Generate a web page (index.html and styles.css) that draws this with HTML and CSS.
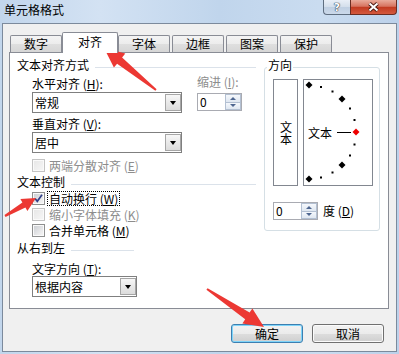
FILE: index.html
```html
<!DOCTYPE html>
<html lang="zh-CN">
<head>
<meta charset="utf-8">
<title>单元格格式</title>
<link rel="stylesheet" href="styles.css">
</head>
<body>
<div class="window">
  <div class="titlebar">
    <span class="title">单元格格式</span>
    <div class="caption">
      <span class="cap-btn help">?</span>
      <span class="cap-btn close">
        <svg width="13" height="10" viewBox="0 0 13 10"><path d="M2.5 1.5L10.5 8.5M10.5 1.5L2.5 8.5" stroke="#4a1a12" stroke-width="3.8"/><path d="M2.5 1.5L10.5 8.5M10.5 1.5L2.5 8.5" stroke="#fff" stroke-width="2"/></svg>
      </span>
    </div>
  </div>
  <div class="client">
    <div class="tabs">
      <div class="tab">数字</div>
      <div class="tab active">对齐</div>
      <div class="tab">字体</div>
      <div class="tab">边框</div>
      <div class="tab">图案</div>
      <div class="tab">保护</div>
    </div>
    <div class="panel">
      <div class="col-left">
        <div class="ghead">文本对齐方式</div>
        <div class="align-row">
          <div class="align-main">
            <div class="label">水平对齐 (<u>H</u>):</div>
            <div class="combo"><span class="combo-text">常规</span><span class="combo-btn"><i class="tri"></i></span></div>
            <div class="label second">垂直对齐 (<u>V</u>):</div>
            <div class="combo"><span class="combo-text">居中</span><span class="combo-btn"><i class="tri"></i></span></div>
          </div>
          <div class="indent">
            <div class="label disabled">缩进 (<u>I</u>):</div>
            <div class="spin"><span class="spin-val">0</span><span class="spin-btns"><span class="sb"><i class="up"></i></span><span class="sb"><i class="down"></i></span></span></div>
          </div>
        </div>
        <div class="check disabled first-check"><span class="box"></span><span class="check-label">两端分散对齐 (<u>E</u>)</span></div>
        <div class="ghead mid">文本控制</div>
        <div class="check c1"><span class="box"><svg width="11" height="11" viewBox="0 0 11 11"><path d="M2 5.5L4.3 8.3L9 1.8" fill="none" stroke="#31408a" stroke-width="1.7"/></svg></span><span class="check-label focus">自动换行 (<u>W</u>)</span></div>
        <div class="check disabled cn"><span class="box"></span><span class="check-label">缩小字体填充 (<u>K</u>)</span></div>
        <div class="check cn"><span class="box"></span><span class="check-label">合并单元格 (<u>M</u>)</span></div>
        <div class="ghead short">从右到左</div>
        <div class="label dir">文字方向 (<u>T</u>):</div>
        <div class="combo narrow"><span class="combo-text">根据内容</span><span class="combo-btn"><i class="tri"></i></span></div>
      </div>
      <div class="orient">
        <div class="orient-title">方向</div>
        <div class="orient-row">
          <div class="vtext"><span class="vtext-inner">文本</span></div>
          <svg class="dial" width="70" height="107" viewBox="0 0 70 107">
            <rect x="0.5" y="0.5" width="69" height="106" fill="#fff" stroke="#828790"/>
            <polygon points="6,2.5 9.5,6 6,9.5 2.5,6"/>
            <rect x="17" y="7" width="2" height="2"/>
            <rect x="28.5" y="11.5" width="2" height="2"/>
            <polygon points="39,16.5 42.5,20 39,23.5 35.5,20"/>
            <rect x="46" y="28.5" width="2" height="2"/>
            <rect x="50.5" y="40" width="2" height="2"/>
            <polygon points="53,49.5 56.5,53 53,56.5 49.5,53" fill="#e00"/>
            <rect x="50.5" y="64.5" width="2" height="2"/>
            <rect x="46" y="75.5" width="2" height="2"/>
            <polygon points="39,82.5 42.5,86 39,89.5 35.5,86"/>
            <rect x="28.5" y="92.5" width="2" height="2"/>
            <rect x="17" y="97.5" width="2" height="2"/>
            <polygon points="6,96.5 9.5,100 6,103.5 2.5,100"/>
            <text x="5" y="59" font-size="12">文本</text>
            <line x1="34" y1="53.5" x2="48" y2="53.5" stroke="#000"/>
          </svg>
        </div>
        <div class="degree-row">
          <div class="spin"><span class="spin-val">0</span><span class="spin-btns"><span class="sb"><i class="up"></i></span><span class="sb"><i class="down"></i></span></span></div>
          <span class="label">度 (<u>D</u>)</span>
        </div>
      </div>
    </div>
    <div class="actions">
      <button class="btn default">确定</button>
      <button class="btn">取消</button>
    </div>
  </div>
  <svg class="annotations" width="399" height="354" viewBox="0 0 399 354">
    <polygon points="156.6,89.2 122.1,57.5 125.3,53.6 104,48 113.9,67.6 117.1,63.7 155.4,90.8"/>
    <polygon points="5.5,216.9 25.4,207.6 27.4,211.1 36,198 20.4,198.9 22.4,202.4 4.5,215.1"/>
    <polygon points="206.4,289.8 245.2,319.2 242.4,323.4 264,327 252.4,308.4 249.6,312.6 207.6,288.2"/>
  </svg>
</div>
</body>
</html>
```
FILE: styles.css
```css
* { box-sizing: border-box; }
html, body { margin: 0; padding: 0; }
body {
  width: 399px;
  height: 354px;
  overflow: hidden;
  font-family: "Noto Sans CJK SC", "Noto Sans", sans-serif;
  font-size: 12px;
  line-height: 14px;
  color: #000;
}
u { text-decoration: underline; }

.window {
  position: relative;
  width: 399px;
  height: 354px;
  display: flex;
  flex-direction: column;
  padding: 0 2px 2px;
  background: linear-gradient(90deg, #c2d6ec 0%, #d3e2f3 25%, #c0d5ec 55%, #cadcf0 80%, #bcd1ea 100%);
}

.titlebar {
  height: 23px;
  flex: none;
  display: flex;
  align-items: flex-start;
}
.title {
  padding: 3px 0 0 2px;
  line-height: 14px;
}
.caption {
  margin-left: auto;
  display: flex;
}
.cap-btn {
  height: 15px;
  display: flex;
  align-items: center;
  justify-content: center;
  border: 1px solid #5f6e80;
  border-top: none;
}
.help {
  width: 27px;
  border-right: none;
  border-radius: 0 0 0 4px;
  background: linear-gradient(#e9eff7, #d3deeb 50%, #bfcfe2 51%, #cbd9ea);
  color: #fff;
  font-family: "DejaVu Sans", sans-serif;
  font-weight: bold;
  font-size: 11px;
  line-height: 13px;
  text-shadow: 0 0 1px #2b3a4c, 0 0 1px #2b3a4c, 0 0 1px #2b3a4c;
}
.close {
  width: 47px;
  border-color: #6b2d22;
  border-radius: 0 0 4px 0;
  background: linear-gradient(#e9ab9b, #d77460 45%, #c23b21 52%, #d4593e 100%);
}

.client {
  flex: 1;
  display: flex;
  flex-direction: column;
  border: 1px solid #7c8a9c;
  background: #f0f0f0;
  padding: 8px 7px 0 6px;
}

.tabs {
  display: flex;
  align-items: flex-end;
  height: 20px;
  padding-left: 1px;
}
.tab {
  width: 52px;
  height: 17px;
  margin-right: 2px;
  border: 1px solid #898c95;
  border-bottom: none;
  border-radius: 2px 2px 0 0;
  background: linear-gradient(#f4f4f4, #ececec 50%, #dfdfdf 51%, #d6d6d6);
  text-align: center;
  line-height: 15px;
}
.tab.active {
  position: relative;
  z-index: 1;
  width: 56px;
  height: 21px;
  margin: 0 0 -1px -2px;
  background: #fff;
  line-height: 18px;
}

.panel {
  height: 257px;
  flex: none;
  display: flex;
  border: 1px solid #898c95;
  background: #fff;
  padding: 0 8px 0 7px;
}

.col-left {
  width: 239px;
  padding-top: 5px;
  display: flex;
  flex-direction: column;
  align-items: flex-start;
}

.ghead {
  display: flex;
  align-items: flex-start;
  gap: 6px;
  height: 14px;
  width: 100%;
  white-space: nowrap;
}
.ghead::after {
  content: "";
  flex: 1;
  height: 1px;
  margin-top: 9px;
  background: #dbe2ea;
}
.ghead.mid { margin-top: 3px; }
.ghead.short { margin-top: 4px; width: 117px; }

.label { line-height: 14px; white-space: nowrap; }
.label.disabled { color: #8d8d8d; }

.align-row {
  display: flex;
  margin-top: 3px;
  padding-left: 15px;
}
.align-main {
  width: 150px;
  padding-top: 2px;
}
.align-main .label { margin-bottom: 1px; }
.align-main .label.second { margin-top: 4px; }
.indent { margin-left: 15px; }
.indent .spin { margin-top: 4px; }

.combo {
  display: flex;
  width: 150px;
  height: 21px;
  border: 1px solid #7f7f7f;
  background: #fff;
}
.combo.narrow { width: 105px; margin-left: 15px; }
.combo-text {
  flex: 1;
  padding-left: 2px;
  line-height: 19px;
}
.combo-btn {
  width: 16px;
  margin: 1px 0;
  border: 1px solid #a6a6a6;
  background: linear-gradient(#f7f7f7, #e9e9e9 50%, #dcdcdc);
  display: flex;
  align-items: center;
  justify-content: center;
}
.tri {
  width: 1px;
  height: 0;
  border-left: 3px solid transparent;
  border-right: 3px solid transparent;
  border-top: 4px solid #000;
}

.spin {
  display: flex;
  width: 45px;
  height: 18px;
  border: 1px solid #a9abb2;
  background: #fff;
}
.spin-val {
  flex: 1;
  padding-left: 2px;
  line-height: 16px;
}
.spin-btns {
  width: 16px;
  display: flex;
  flex-direction: column;
}
.sb {
  flex: 1;
  border: 1px solid #b3c0d2;
  background: linear-gradient(#f5f8fc, #dfe7f1);
  display: flex;
  align-items: center;
  justify-content: center;
}
.sb + .sb { border-top: none; }
.up, .down {
  width: 1px;
  height: 0;
  border-left: 3px solid transparent;
  border-right: 3px solid transparent;
}
.up { border-bottom: 3px solid #4e6690; }
.down { border-top: 3px solid #4e6690; }

.check {
  display: flex;
  align-items: center;
  height: 13px;
  padding-left: 15px;
  white-space: nowrap;
}
.check.first-check { margin-top: 6px; }
.check.c1 { margin-top: 3px; }
.check.cn { margin-top: 3px; }
.box {
  width: 13px;
  height: 13px;
  flex: none;
  border: 1px solid #8e8f8f;
  background: linear-gradient(135deg, #c9ccd1, #eeeeef 75%, #f6f6f6);
  box-shadow: inset 0 0 0 1px #fafafa;
  display: flex;
  align-items: center;
  justify-content: center;
}
.check.disabled .box {
  border-color: #c4c4c4;
  background: linear-gradient(135deg, #e6e6e6, #f7f7f7);
}
.check.disabled { color: #8d8d8d; }
.check-label {
  margin-left: 3px;
  padding: 0 1px;
  line-height: 13px;
}
.check-label.focus { outline: 1px dotted #000; }

.label.dir { margin: 7px 0 0 15px; }

.orient {
  align-self: flex-start;
  width: 116px;
  height: 164px;
  margin: 14px 0 0 8px;
  border: 1px solid #d5dfe5;
  border-radius: 3px;
  padding-left: 8px;
}
.orient-title {
  width: fit-content;
  margin: -10px 0 0 -6px;
  padding: 0 1px;
  background: #fff;
  line-height: 14px;
}
.orient-row {
  display: flex;
  gap: 5px;
  margin-top: 7px;
}
.vtext {
  width: 25px;
  height: 107px;
  border: 1px solid #828790;
  display: flex;
  align-items: center;
  justify-content: center;
}
.vtext-inner {
  writing-mode: vertical-rl;
  text-orientation: upright;
  line-height: 14px;
  letter-spacing: 0;
}
.dial { display: block; }
.dial text { font-family: "Noto Sans CJK SC", sans-serif; }

.degree-row {
  display: flex;
  align-items: center;
  gap: 5px;
  margin-top: 16px;
}

.actions {
  display: flex;
  justify-content: flex-end;
  gap: 9px;
  margin-top: 15px;
  padding-right: 5px;
}
.btn {
  width: 72px;
  height: 19px;
  padding: 0;
  border: 1px solid #707070;
  border-radius: 3px;
  background: linear-gradient(#f2f2f2, #ebebeb 50%, #dddddd 51%, #cfcfcf);
  box-shadow: inset 0 0 0 1px #fbfbfb;
  font: inherit;
  line-height: 17px;
  color: #000;
}
.btn.default {
  border-color: #3c7fb1;
  box-shadow: inset 0 0 0 1px #7ed4f9;
}

.annotations {
  position: absolute;
  left: 0;
  top: 0;
  pointer-events: none;
  fill: #ec3833;
}
```
